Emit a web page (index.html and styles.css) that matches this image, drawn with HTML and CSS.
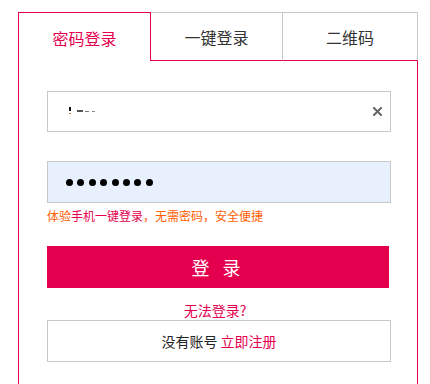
FILE: index.html
```html
<!DOCTYPE html>
<html lang="zh-CN">
<head>
<meta charset="utf-8">
<title>登录</title>
<link rel="stylesheet" href="styles.css">
</head>
<body>
<div class="box">
  <div class="tabs">
    <div class="tab tab-active">密码登录</div>
    <div class="tab tab-mid">一键登录</div>
    <div class="tab tab-last">二维码</div>
  </div>
  <div class="panel">
    <div class="field field-user">
      <span class="masked"><i class="m1"></i><i class="m2"></i><i class="m3"></i><i class="m4"></i><i class="m5"></i></span>
      <svg class="clear" width="9" height="9" viewBox="0 0 9 9"><path d="M1 1L8 8M8 1L1 8" stroke="#666" stroke-width="2" stroke-linecap="square"/></svg>
    </div>
    <div class="field field-pass">
      <span class="dot"></span><span class="dot"></span><span class="dot"></span><span class="dot"></span><span class="dot"></span><span class="dot"></span><span class="dot"></span><span class="dot"></span>
    </div>
    <div class="hint"><span class="orange">体验</span><span class="red">手机一键登录</span><span class="orange">，无需密码，安全便捷</span></div>
    <div class="btn">登录</div>
    <div class="forgot">无法登录?</div>
    <div class="register">没有账号 <span class="red">立即注册</span></div>
  </div>
</div>
</body>
</html>
```
FILE: styles.css
```css
* { box-sizing: border-box; }
html, body { margin: 0; padding: 0; background: #fff; }
body {
  font-family: "Noto Sans CJK SC", "Noto Sans", sans-serif;
  color: #333;
  width: 430px;
  height: 384px;
  overflow: hidden;
}
.box {
  margin: 12px 0 0 18px;
  width: 400px;
}
.tabs {
  display: grid;
  grid-template-columns: 133px 132px 135px;
  height: 49px;
}
.tab {
  font-size: 16px;
  text-align: center;
  line-height: 46px;
  padding-top: 2px;
}
.tab-active {
  color: #e5004f;
  border: 1px solid #e5004f;
  border-bottom: none;
}
.tab-mid, .tab-last {
  border-top: 1px solid #c8c8c8;
  border-right: 1px solid #c8c8c8;
  border-bottom: 1px solid #e5004f;
  line-height: 45px;
}
.panel {
  border-left: 1px solid #e5004f;
  border-right: 1px solid #e5004f;
  padding: 30px 26px 40px 28px;
}
.field {
  width: 344px;
  border: 1px solid #c8c8c8;
  display: flex;
  align-items: center;
}
.field-user {
  height: 41px;
  padding: 0 8px 0 21px;
  justify-content: space-between;
}
.masked {
  position: relative;
  width: 32px;
  height: 10px;
}
.masked i { position: absolute; display: block; }
.m1 { left: 0; top: 0; width: 2px; height: 4px; background: #111; }
.m2 { left: 0; top: 6px; width: 2px; height: 1px; background: #c87a2a; }
.m3 { left: 8px; top: 3px; width: 6px; height: 2px; background: #555; }
.m4 { left: 16px; top: 4px; width: 4px; height: 1px; background: #777; }
.m5 { left: 23px; top: 4px; width: 3px; height: 1px; background: #888; }
.clear { display: block; }
.field-pass {
  margin-top: 29px;
  height: 42px;
  background: #e8f0fe;
  padding-left: 18px;
  gap: 4.4px;
}
.dot {
  width: 7px;
  height: 7px;
  border-radius: 50%;
  background: #000;
  display: block;
}
.hint {
  margin-top: 4px;
  font-size: 12px;
  line-height: 18px;
  white-space: nowrap;
}
.orange { color: #ff6000; }
.red { color: #e5004f; }
.btn {
  margin-top: 21px;
  width: 342px;
  height: 42px;
  background: #e5004f;
  color: #fff;
  font-size: 18px;
  line-height: 42px;
  text-align: center;
  letter-spacing: 13px;
  padding-left: 9px;
}
.forgot {
  margin-top: 12px;
  font-size: 14px;
  line-height: 20px;
  color: #e5004f;
  text-align: center;
  padding-right: 8px;
}
.register {
  width: 344px;
  height: 42px;
  border: 1px solid #c8c8c8;
  font-size: 14px;
  line-height: 40px;
  text-align: center;
  color: #222;
}
```
